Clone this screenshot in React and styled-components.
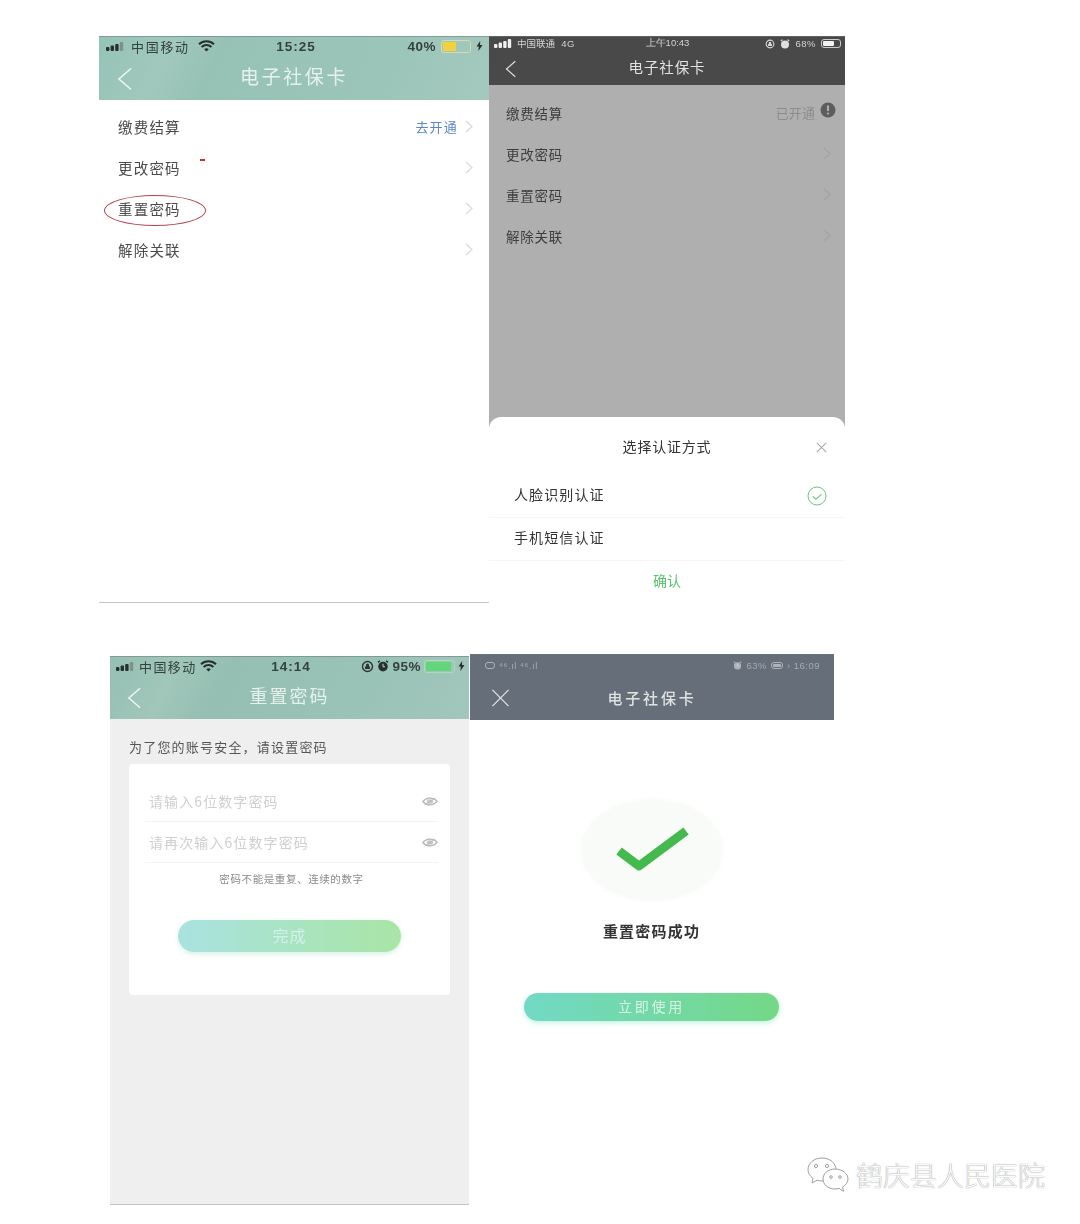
import React from 'react';
import styled, { createGlobalStyle } from 'styled-components';

const GlobalStyle = createGlobalStyle`
    html, body {
        margin: 0;
        padding: 0;
        background: #fff;
    }
    #root {
        width: 1080px;
        height: 1224px;
        overflow: hidden;
    }
`;

const Page = styled.div`
    position: relative;
    box-sizing: border-box;
    width: 1080px;
    height: 1224px;
    padding-top: 36px;
    background: #fff;
    font-family: "Noto Sans CJK SC", "Liberation Sans", sans-serif;
`;

const ShotRow = styled.div`
    display: flex;
    align-items: flex-start;
    margin-left: ${p => p.$left}px;
    margin-top: ${p => p.$top}px;
`;

const Shot = styled.div`
    position: relative;
    display: flex;
    flex-direction: column;
    box-sizing: border-box;
    flex: none;
    width: ${p => p.$w}px;
    height: ${p => p.$h}px;
    margin-top: ${p => p.$top || 0}px;
    margin-left: ${p => p.$gap || 0}px;
    background: ${p => p.$bg || '#fff'};
    border-bottom: ${p => p.$line ? '1px solid #c4c4c4' : '0'};
    filter: blur(.35px);
`;

const Header = styled.div`
    flex: none;
    height: ${p => p.$h}px;
    display: flex;
    flex-direction: column;
    background: ${p => p.$bg};
    border-top: 1px solid rgba(110, 120, 118, .55);
    box-sizing: border-box;
`;

const StatusBar = styled.div`
    height: ${p => p.$h}px;
    flex: none;
    box-sizing: border-box;
    display: flex;
    align-items: center;
    justify-content: space-between;
    padding: ${p => p.$pad};
    color: ${p => p.$color};
    font-size: ${p => p.$size}px;
`;

const StatusSide = styled.div`
    display: flex;
    align-items: center;
    gap: ${p => p.$gap || 5}px;
    flex: 1 1 0;
    justify-content: ${p => p.$end ? 'flex-end' : 'flex-start'};
    white-space: nowrap;
`;

const Carrier = styled.span`
    letter-spacing: ${p => p.$ls || 0}px;
    margin-right: ${p => p.$after || 0}px;
    padding-bottom: ${p => p.$lift || 0}px;
`;

const Clock = styled.span`
    font-family: "Liberation Sans", sans-serif;
    font-size: ${p => p.$size ? `${p.$size}px` : 'inherit'};
    font-weight: ${p => p.$light ? 400 : 700};
    letter-spacing: ${p => p.$light ? 0 : 1}px;
    margin-left: ${p => p.$shift || 0}px;
    white-space: nowrap;
`;

const Percent = styled.span`
    font-family: "Liberation Sans", sans-serif;
    font-size: ${p => p.$size ? `${p.$size}px` : 'inherit'};
    font-weight: ${p => p.$light ? 400 : 700};
    letter-spacing: .5px;
`;

const Battery = styled.div`
    width: ${p => p.$w}px;
    height: ${p => p.$h}px;
    box-sizing: border-box;
    border: 1px solid ${p => p.$edge};
    border-radius: 3px;
    padding: 1px;
    display: flex;
`;

const BatteryFill = styled.div`
    border-radius: 1px;
    background: ${p => p.$color};
`;

const NavBar = styled.div`
    position: relative;
    flex: 1;
    display: flex;
    align-items: center;
    justify-content: center;
    padding-bottom: ${p => p.$lift || 0}px;
`;

const NavIcon = styled.div`
    position: absolute;
    left: ${p => p.$left}px;
    top: 50%;
    transform: translateY(-50%);
    display: flex;
`;

const NavTitle = styled.div`
    color: ${p => p.$color};
    font-size: ${p => p.$size}px;
    font-weight: ${p => p.$weight || 400};
    letter-spacing: ${p => p.$ls}px;
`;

const Body = styled.div`
    flex: 1;
    padding-top: ${p => p.$top}px;
`;

const Row = styled.div`
    height: 41px;
    box-sizing: border-box;
    display: flex;
    align-items: center;
    justify-content: space-between;
    padding: ${p => p.$pad};
    color: ${p => p.$color};
    font-size: ${p => p.$size}px;
    letter-spacing: ${p => p.$ls}px;
`;

const RowRight = styled.div`
    display: flex;
    align-items: center;
    gap: ${p => p.$gap}px;
    font-size: 13px;
    letter-spacing: ${p => p.$ls}px;
    color: ${p => p.$color};
`;

const WarnWrap = styled.div`
    display: flex;
    margin-top: -6px;
`;

const Ellipse = styled.div`
    position: absolute;
    left: 5px;
    top: 159px;
    width: 102px;
    height: 31px;
    box-sizing: border-box;
    border: 1.5px solid #b4434b;
    border-radius: 50%;
`;

const RedDash = styled.div`
    position: absolute;
    left: 101px;
    top: 123px;
    width: 5px;
    height: 2px;
    background: #e0262f;
`;

const Sheet = styled.div`
    flex: none;
    background: #fff;
    border-radius: 12px 12px 0 0;
`;

const SheetHead = styled.div`
    position: relative;
    height: 58px;
    display: flex;
    align-items: center;
    justify-content: center;
    padding-bottom: 1px;
    box-sizing: border-box;
    font-size: 14px;
    letter-spacing: .8px;
    color: #333;
`;

const SheetClose = styled.div`
    position: absolute;
    right: 18px;
    top: 25px;
    display: flex;
`;

const Option = styled.div`
    height: 42px;
    display: flex;
    align-items: center;
    justify-content: space-between;
    padding: 0 18px 0 25px;
    font-size: 14px;
    letter-spacing: 1.1px;
    color: #333;
    border-bottom: 1px solid #f5f5f5;
`;

const OptionLabel = styled.span`
    padding-bottom: 4px;
`;

const Confirm = styled.div`
    height: 44px;
    box-sizing: border-box;
    display: flex;
    align-items: center;
    justify-content: center;
    padding-bottom: 7px;
    font-size: 14px;
    color: #58c46c;
`;

const Intro = styled.div`
    flex: none;
    padding: 18px 0 8px 19px;
    font-size: 13px;
    line-height: 19px;
    letter-spacing: 1.2px;
    color: #555;
`;

const Card = styled.div`
    flex: none;
    box-sizing: border-box;
    height: 231px;
    margin: 0 19px;
    padding: 17px 12px 0 16px;
    background: #fff;
    border-radius: 4px;
`;

const Field = styled.div`
    height: 41px;
    box-sizing: border-box;
    display: flex;
    align-items: center;
    justify-content: space-between;
    padding: 0 0 0 4px;
    border-bottom: 1px solid #f3f3f3;
    font-size: 14px;
    letter-spacing: 1.1px;
    color: #cfcfcf;
`;

const Hint = styled.div`
    padding-top: 9px;
    text-align: center;
    font-size: 10.5px;
    line-height: 14px;
    letter-spacing: .6px;
    color: #8a8a8a;
`;

const PillButton = styled.div`
    box-sizing: border-box;
    width: ${p => p.$w}px;
    height: ${p => p.$h}px;
    margin: ${p => p.$margin};
    padding-bottom: 3px;
    display: flex;
    align-items: center;
    justify-content: center;
    border-radius: 999px;
    background: linear-gradient(90deg, ${p => p.$from}, ${p => p.$to});
    box-shadow: 0 2px 5px ${p => p.$glow};
    color: ${p => p.$color};
    font-size: ${p => p.$size}px;
    letter-spacing: ${p => p.$ls}px;
`;

const SuccessWrap = styled.div`
    flex: 1;
    display: flex;
    flex-direction: column;
    align-items: center;
    padding: 80px 1px 0 0;
`;

const SuccessBlob = styled.div`
    width: 140px;
    height: 100px;
    padding-bottom: 3px;
    box-sizing: border-box;
    display: flex;
    align-items: center;
    justify-content: center;
    border-radius: 50%;
    background: #f8fbf7;
    box-shadow: 0 0 5px 2px #fafcf9;
`;

const SuccessText = styled.div`
    margin-top: 21px;
    font-size: 15px;
    font-weight: 700;
    line-height: 20px;
    letter-spacing: 1.2px;
    color: #333;
`;

const Watermark = styled.div`
    position: absolute;
    left: 807px;
    top: 1156px;
    display: flex;
    align-items: center;
    gap: 7px;
`;

const WatermarkText = styled.span`
    font-size: 27px;
    font-weight: 300;
    line-height: 38px;
    color: #fbfbfb;
    text-shadow: 0 0 1px #666;
    white-space: nowrap;
`;

const Signal = ({ color, dim }) => (
    <svg width="20" height="9" viewBox="0 0 20 9">
        <rect x="0" y="5" width="3.4" height="4" rx="1" fill={color} />
        <rect x="4.6" y="3.6" width="3.4" height="5.4" rx="1" fill={color} />
        <rect x="9.2" y="2" width="3.4" height="7" rx="1" fill={color} />
        <rect x="13.8" y="0" width="3.4" height="9" rx="1" fill={dim} />
    </svg>
);

const Wifi = ({ color }) => (
    <svg width="17" height="12" viewBox="0 0 17 12" fill="none" stroke={color} strokeWidth="2">
        <path d="M1 4.2a11 11 0 0 1 15 0" />
        <path d="M3.6 7a7 7 0 0 1 9.8 0" />
        <path d="M8.5 11.5 6.2 9.3a3.4 3.4 0 0 1 4.6 0z" fill={color} stroke="none" />
    </svg>
);

const Bolt = ({ color }) => (
    <svg width="7" height="10" viewBox="0 0 7 10">
        <path d="M4.2 0 0.5 5.6h2.3L2.4 10 6.5 3.9H4z" fill={color} />
    </svg>
);

const Lock = ({ color, size = 13 }) => (
    <svg width={size} height={size} viewBox="0 0 13 13" fill="none">
        <circle cx="6.5" cy="6.5" r="5" stroke={color} strokeWidth="1.4" />
        <path d="M4 9V6.5h5V9zM5 6.5V5a1.5 1.5 0 0 1 3 0v1.5" fill={color} />
    </svg>
);

const Alarm = ({ color, size = 12 }) => (
    <svg width={size} height={size} viewBox="0 0 12 12">
        <circle cx="6" cy="6.6" r="4.8" fill={color} />
        <path d="M1 2.4 3 .8M11 2.4 9 .8" stroke={color} strokeWidth="1.4" />
        <path d="M6 3.8v3h2" stroke="#c8d8d2" strokeWidth="1" fill="none" />
    </svg>
);

const BackArrow = ({ color, w = 15, h = 24 }) => (
    <svg width={w} height={h} viewBox="0 0 15 24" fill="none" stroke={color} strokeWidth="1.6">
        <path d="M14 1.5 2 12l12 10.5" />
    </svg>
);

const Chevron = ({ color }) => (
    <svg width="8" height="13" viewBox="0 0 8 13" fill="none" stroke={color} strokeWidth="1.2">
        <path d="M1 1l6 5.5L1 12" />
    </svg>
);

const Cross = ({ color, size, width = 1.4 }) => (
    <svg width={size} height={size} viewBox="0 0 20 20" stroke={color} strokeWidth={width}>
        <path d="M1.5 1.5l17 17M18.5 1.5l-17 17" />
    </svg>
);

const Eye = () => (
    <svg width="16" height="11" viewBox="0 0 18 12" fill="none">
        <path d="M1 6.2C4 1.6 12 .4 17 5.6 14 10.4 6 11.6 1 6.2z" stroke="#b5b8b8" strokeWidth="1.5" />
        <ellipse cx="9" cy="6" rx="3.6" ry="2.6" fill="#c6c8c8" />
        <path d="M3 10 15 2" stroke="#b5b8b8" />
    </svg>
);

const CheckCircle = () => (
    <svg width="20" height="20" viewBox="0 0 20 20" fill="none" stroke="#6cc584">
        <circle cx="10" cy="10" r="9" strokeWidth="1" />
        <path d="M5.8 10.4l3 2.8 5.6-4.8" strokeWidth="1.2" />
    </svg>
);

const WarnDot = () => (
    <svg width="16" height="16" viewBox="0 0 16 16">
        <circle cx="8" cy="8" r="7.5" fill="#5d5d5d" />
        <path d="M8 3.5v5.5" stroke="#b0afaf" strokeWidth="2" />
        <circle cx="8" cy="11.6" r="1.1" fill="#b0afaf" />
    </svg>
);

const BigCheck = () => (
    <svg width="76" height="46" viewBox="0 0 76 46" fill="none" stroke="#44b94e" strokeWidth="9" strokeLinejoin="round">
        <path d="M5 25 25 40 72 5" />
    </svg>
);

const WeChat = () => (
    <svg width="42" height="36" viewBox="0 0 42 36" fill="#fdfdfd" stroke="#a0a0a0" strokeWidth="1">
        <path d="M15 1C7 1 1 6.2 1 12.6c0 3.6 2 6.6 5 8.8l-1 4.6 5.2-2.8c1.6.5 3.2.8 4.8.8 8 0 14-5.2 14-11.4S23 1 15 1z" />
        <path d="M28 12c-6.800 0-12 4.400-12 10s5.200 10 12 10c1.400 0 2.800-.2 4-.6l4.600 3-1-4.400c3.400-2 5.400-4.800 5.400-8 0-5.600-6-10-13-10z" />
        <circle cx="9" cy="9" r="1.6" />
        <circle cx="20" cy="9" r="1.6" />
        <circle cx="24" cy="20" r="1.3" />
        <circle cx="33" cy="20" r="1.3" />
    </svg>
);

const menu = ['更改密码', '重置密码', '解除关联'];

const App = () => {
    return (
        <Page>
            <GlobalStyle />
            <ShotRow $left={99} $top={0}>
                <Shot $w={390} $h={567} $line>
                    <Header $h={64} $bg="linear-gradient(115deg, #94c4b6 0%, #a1c8bc 18%, #96c2b5 30%, #9bc5b9 70%, #a4c8bd 100%)">
                        <StatusBar $h={21} $pad="0 6px 3px 7px" $color="#33423e" $size={13}>
                            <StatusSide $gap={5}>
                                <Signal color="#27302e" dim="#7e9189" />
                                <Carrier $ls={1.7} $after={3}>中国移动</Carrier>
                                <Wifi color="#27302e" />
                            </StatusSide>
                            <Clock $size={13.5} $shift={3}>15:25</Clock>
                            <StatusSide $end $gap={5}>
                                <Percent $size={13.5}>40%</Percent>
                                <Battery $w={30} $h={13} $edge="#d8dca8">
                                    <BatteryFill $color="#f1d23a" style={{ width: '50%' }} />
                                </Battery>
                                <Bolt color="#27302e" />
                            </StatusSide>
                        </StatusBar>
                        <NavBar $lift={7}>
                            <NavIcon $left={18}><BackArrow color="#eef6f3" /></NavIcon>
                            <NavTitle $color="#e6f1ed" $size={19} $ls={2.6}>电子社保卡</NavTitle>
                        </NavBar>
                    </Header>
                    <Body $top={8}>
                        <Row $pad="0 16px 4px 19px" $color="#4a4a4a" $size={14.5} $ls={1.2}>
                            缴费结算
                            <RowRight $color="#5b86c8" $gap={7} $ls={1.2}>去开通<Chevron color="#d6d9d9" /></RowRight>
                        </Row>
                        {menu.map(label => (
                            <Row key={label} $pad="0 16px 4px 19px" $color="#4a4a4a" $size={14.5} $ls={1.2}>
                                {label}
                                <Chevron color="#d9dcdc" />
                            </Row>
                        ))}
                    </Body>
                    <Ellipse />
                    <RedDash />
                </Shot>
                <Shot $w={356} $h={569} $bg="#b0afaf">
                    <Header $h={49} $bg="#494949">
                        <StatusBar $h={15} $pad="0 4px 2px 5px" $color="#d3d3d3" $size={9.5}>
                            <StatusSide $gap={3}>
                                <Signal color="#efefef" dim="#efefef" />
                                <Carrier $lift={2}>中国联通</Carrier>
                                <Percent $light>&nbsp;4G</Percent>
                            </StatusSide>
                            <Clock $light>上午10:43</Clock>
                            <StatusSide $end $gap={5}>
                                <Lock color="#d8d8d8" size={10} />
                                <Alarm color="#e0e0e0" size={10} />
                                <Percent $light>68%</Percent>
                                <Battery $w={20} $h={9} $edge="#ccc">
                                    <BatteryFill $color="#f2f2f2" style={{ width: '68%' }} />
                                </Battery>
                            </StatusSide>
                        </StatusBar>
                        <NavBar $lift={5}>
                            <NavIcon $left={16}><BackArrow color="#e0e0e0" w={11} h={18} /></NavIcon>
                            <NavTitle $color="#e2e2e2" $size={14.5} $ls={.9}>电子社保卡</NavTitle>
                        </NavBar>
                    </Header>
                    <Body $top={9}>
                        <Row $pad="0 9px 4px 17px" $color="#3d3d3d" $size={13.5} $ls={.75}>
                            缴费结算
                            <RowRight $color="#8c8c8c" $gap={5} $ls={.1}>已开通<WarnWrap><WarnDot /></WarnWrap></RowRight>
                        </Row>
                        {menu.map(label => (
                            <Row key={label} $pad="0 14px 4px 17px" $color="#3d3d3d" $size={13.5} $ls={.75}>
                                {label}
                                <Chevron color="#a3a3a3" />
                            </Row>
                        ))}
                    </Body>
                    <Sheet>
                        <SheetHead>
                            选择认证方式
                            <SheetClose><Cross color="#a9a9a9" size={11} width={2} /></SheetClose>
                        </SheetHead>
                        <Option><OptionLabel>人脸识别认证</OptionLabel><CheckCircle /></Option>
                        <Option><OptionLabel>手机短信认证</OptionLabel></Option>
                        <Confirm>确认</Confirm>
                    </Sheet>
                </Shot>
            </ShotRow>
            <ShotRow $left={110} $top={49}>
                <Shot $w={359} $h={549} $top={2} $bg="#efefef" $line>
                    <Header $h={63} $bg="linear-gradient(115deg, #94c0b3 0%, #a1c6ba 18%, #94bfb2 32%, #9ac3b7 70%, #a2c6bb 100%)">
                        <StatusBar $h={20} $pad="0 4px 2px 6px" $color="#33423e" $size={13}>
                            <StatusSide $gap={3}>
                                <Signal color="#27302e" dim="#7e9189" />
                                <Carrier $ls={1.4}>中国移动</Carrier>
                                <Wifi color="#27302e" />
                            </StatusSide>
                            <Clock $size={13.5} $shift={1}>14:14</Clock>
                            <StatusSide $end $gap={3}>
                                <Lock color="#2c3633" />
                                <Alarm color="#27302e" />
                                <Percent $size={13.5}>95%</Percent>
                                <Battery $w={31} $h={13} $edge="#a6e0b0">
                                    <BatteryFill $color="#63d57a" style={{ width: '92%' }} />
                                </Battery>
                                <Bolt color="#27302e" />
                            </StatusSide>
                        </StatusBar>
                        <NavBar $lift={6}>
                            <NavIcon $left={17}><BackArrow color="#eef6f3" w={14} h={23} /></NavIcon>
                            <NavTitle $color="#e6f1ed" $size={18} $ls={2}>重置密码</NavTitle>
                        </NavBar>
                    </Header>
                    <Intro>为了您的账号安全，请设置密码</Intro>
                    <Card>
                        <Field>请输入6位数字密码<Eye /></Field>
                        <Field>请再次输入6位数字密码<Eye /></Field>
                        <Hint>密码不能是重复、连续的数字</Hint>
                        <PillButton $w={223} $h={32} $margin="34px 0 0 33px" $from="#a9e2e0" $to="#a9e5a5" $glow="rgba(170, 230, 210, .5)" $color="#d2f1e8" $size={16} $ls={1}>
                            完成
                        </PillButton>
                    </Card>
                </Shot>
                <Shot $w={364} $h={440} $gap={1}>
                    <Header $h={66} $bg="#666f79">
                        <StatusBar $h={20} $pad="0 14px 0 15px" $color="#a4aab1" $size={9.5}>
                            <StatusSide $gap={4}>
                                <Battery $w={10} $h={7} $edge="#aeb3b9" />
                                <Percent $light>⁴⁶.ıl ⁴⁶.ıl</Percent>
                            </StatusSide>
                            <StatusSide $end $gap={4}>
                                <Alarm color="#aeb3b9" size={9} />
                                <Percent $light>63%</Percent>
                                <Battery $w={12} $h={7} $edge="#aeb3b9">
                                    <BatteryFill $color="#aeb3b9" style={{ width: '100%' }} />
                                </Battery>
                                <Percent $light>› 16:09</Percent>
                            </StatusSide>
                        </StatusBar>
                        <NavBar $lift={1}>
                            <NavIcon $left={21}><Cross color="#e2e5e8" size={19} width={1.3} /></NavIcon>
                            <NavTitle $color="#dfe2e2" $size={15} $weight={500} $ls={2.8}>电子社保卡</NavTitle>
                        </NavBar>
                    </Header>
                    <SuccessWrap>
                        <SuccessBlob><BigCheck /></SuccessBlob>
                        <SuccessText>重置密码成功</SuccessText>
                        <PillButton $w={255} $h={28} $margin="52px 0 0 0" $from="#72d9c6" $to="#74d886" $glow="rgba(120, 225, 190, .45)" $color="#d6f3e6" $size={14} $ls={2.8}>
                            立即使用
                        </PillButton>
                    </SuccessWrap>
                </Shot>
            </ShotRow>
            <Watermark>
                <WeChat />
                <WatermarkText>鹤庆县人民医院</WatermarkText>
            </Watermark>
        </Page>
    );
};

export default App;
